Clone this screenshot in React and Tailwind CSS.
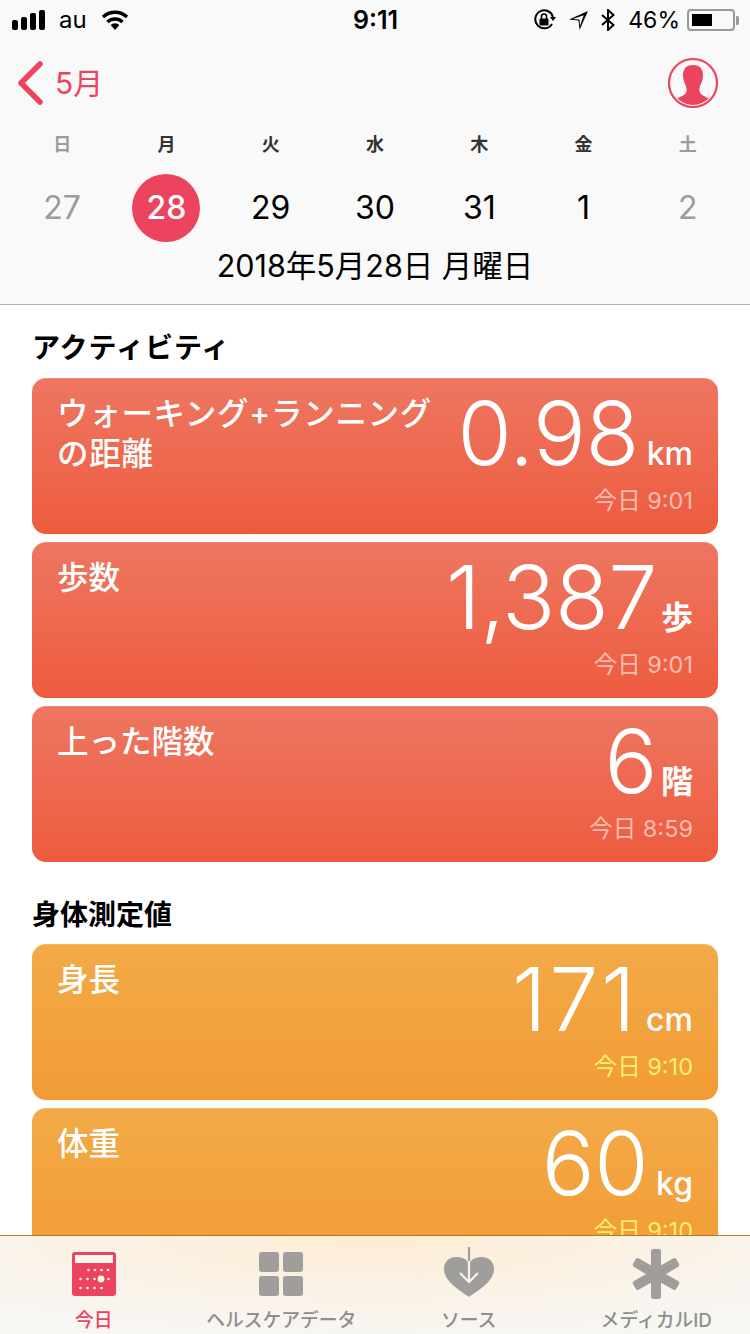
const sans = "font-['Inter','Noto_Sans_CJK_JP',sans-serif]";

const days = [
  { w: "日", d: "27", off: true },
  { w: "月", d: "28", today: true },
  { w: "火", d: "29" },
  { w: "水", d: "30" },
  { w: "木", d: "31" },
  { w: "金", d: "1" },
  { w: "土", d: "2", off: true },
];

function StatusBar() {
  return (
    <div className="h-10 flex items-center justify-between pl-3 pr-[11px] text-black">
      <div className="flex items-center w-[298px]">
        <div className="flex items-end gap-[3px] h-5">
          <div className="w-[6px] h-[10px] rounded-[2px] bg-black" />
          <div className="w-[6px] h-[13px] rounded-[2px] bg-black" />
          <div className="w-[6px] h-[17px] rounded-[2px] bg-black" />
          <div className="w-[6px] h-[20px] rounded-[2px] bg-black" />
        </div>
        <span className="ml-[14px] text-[24px] leading-none">au</span>
        <svg className="ml-[14px]" width="28" height="20" viewBox="0 0 28 20">
          <path d="M14 20 L9.6 15 A6.5 6.5 0 0 1 18.4 15 Z" fill="#000" />
          <path d="M6.5 12 A11 11 0 0 1 21.5 12" fill="none" stroke="#000" strokeWidth="3.4" />
          <path d="M2 7 A17.5 17.5 0 0 1 26 7" fill="none" stroke="#000" strokeWidth="3.4" />
        </svg>
      </div>
      <span className="text-[25px] font-semibold leading-none">9:11</span>
      <div className="flex items-center justify-end w-[298px]">
        <svg width="24" height="22" viewBox="0 0 24 22">
          <path d="M19 15 A9 9 0 1 1 20 8" fill="none" stroke="#000" strokeWidth="2" />
          <path d="M17 8 L23 8 L20 12 Z" fill="#000" />
          <rect x="6.5" y="9.5" width="9" height="7" rx="1" fill="#000" />
          <path d="M8.5 10 V7.5 A2.5 2.5 0 0 1 13.5 7.5 V10" fill="none" stroke="#000" strokeWidth="1.6" />
        </svg>
        <svg className="ml-[11px]" width="21" height="21" viewBox="0 0 20 20">
          <path d="M19 1 L1 9 L10 10 L11 19 Z M15 5 L4.5 8.6 L11 9 L11.4 15.2 Z" fill="#000" fillRule="evenodd" />
        </svg>
        <svg className="ml-[11px]" width="16" height="22" viewBox="0 0 15 22">
          <path d="M1.5 6 L13 16 L7.5 21 V1 L13 6 L1.5 16" fill="none" stroke="#000" strokeWidth="2" />
        </svg>
        <span className="ml-[12px] text-[23px] leading-none">46%</span>
        <div className="ml-[7px] w-[48px] h-[22px] rounded-[4px] border-2 border-[#9a9a9a] p-[3px]">
          <div className="w-[20px] h-full bg-black" />
        </div>
        <div className="w-[3px] h-[9px] rounded-r-[2px] bg-[#9a9a9a] ml-[1px]" />
      </div>
    </div>
  );
}

function DayCell({ day }) {
  return (
    <div className="flex flex-col items-center">
      <div className={`h-[24px] leading-[24px] text-[18px] font-semibold ${day.off ? "text-[#9b9b9b]" : "text-[#333]"}`}>
        {day.w}
      </div>
      <div
        className={`mt-[17px] w-[68px] h-[68px] rounded-full flex items-center justify-center text-[32px] ${
          day.today ? "bg-[#ec435f] text-white font-medium" : day.off ? "text-[#9b9b9b]" : "text-black"
        }`}
      >
        {day.d}
      </div>
    </div>
  );
}

function Header() {
  return (
    <div className="bg-[#f9f9f9] border-b border-[#b2b2b2] shrink-0">
      <StatusBar />
      <div className="h-[92px] flex items-center justify-between pl-[17px] pr-[31px] pb-[6px]">
        <div className="flex items-center">
          <svg width="26" height="44" viewBox="0 0 26 44">
            <path d="M23 3 L4 22 L23 41" fill="none" stroke="#ec435f" strokeWidth="5.5" strokeLinecap="round" strokeLinejoin="round" />
          </svg>
          <span className="ml-[12px] text-[30px] leading-none text-[#ec435f]">5月</span>
        </div>
        <svg width="52" height="52" viewBox="0 0 52 52">
          <defs>
            <clipPath id="avatar"><circle cx="26" cy="26" r="22" /></clipPath>
          </defs>
          <circle cx="26" cy="26" r="24" fill="none" stroke="#ec435f" strokeWidth="2.2" />
          <path
            clipPath="url(#avatar)"
            d="M26 8 C33 8 36 12 36 18 C36 24 33 28 32.5 31 C32 35 33 37 37 39 C41 41 44 42 45 46 L46 52 H6 L7 46 C8 42 11 41 15 39 C19 37 20 35 19.5 31 C19 28 16 24 16 18 C16 12 19 8 26 8 Z"
            fill="#ec435f"
          />
        </svg>
      </div>
      <div className="grid grid-cols-7 px-[10px] mt-[1px]">
        {days.map((day) => (
          <DayCell key={day.w} day={day} />
        ))}
      </div>
      <div className="text-center text-[30.5px] leading-[40px] text-black mt-[4px] pb-[18px]">2018年5月28日 月曜日</div>
    </div>
  );
}

function Card({ title, value, unit, time, tone, wide, kanji, valueClass = "tracking-[-0.5px]" }) {
  const bg =
    tone === "red"
      ? "bg-gradient-to-b from-[#ee7661] to-[#ed5b3e] border-[#f08a78]"
      : "bg-gradient-to-b from-[#f2aa47] to-[#f29b35] border-[#f4b565]";
  const timeColor = tone === "red" ? "text-[#f8bdaf]" : "text-[#fdf06a]";
  return (
    <div className={`${bg} h-[156px] rounded-[14px] border-t relative overflow-hidden flex justify-between pl-[25px] pr-[25px] text-white`}>
      <div className={`w-[380px] pt-[15px] text-[31.5px] leading-[40px] font-medium ${wide ? "tracking-[0.7px]" : ""}`}>{title}</div>
      <div className="flex flex-col items-end pt-[4px]">
        <div className="flex items-baseline h-[100px] leading-[100px]">
          <span className={`text-[88px] font-light ${valueClass}`}>{value}</span>
          <span className={`text-[32px] ${kanji ? "ml-[4px] font-semibold" : "ml-[8px] font-medium"}`}>{unit}</span>
        </div>
        <div className={`mt-[3px] text-[23.5px] leading-[30px] ${timeColor}`}>{time}</div>
      </div>
    </div>
  );
}

function SectionTitle({ children, wide }) {
  return (
    <div className={`h-[30px] mb-[15px] text-[28px] leading-[30px] font-semibold text-black ${wide ? "tracking-[1px]" : ""}`}>
      {children}
    </div>
  );
}

function Tab({ label, active, children }) {
  return (
    <div className="flex flex-col items-center">
      <div className="h-[68px] flex items-center justify-center">{children}</div>
      <div className={`mt-[1px] text-[18.8px] leading-[24px] font-medium whitespace-nowrap ${active ? "text-[#ec435f]" : "text-[#8e8e8e]"}`}>
        {label}
      </div>
    </div>
  );
}

function TabBar() {
  const dots = [
    [16, 18], [22.5, 18], [29, 18], [35.5, 18],
    [8, 27], [15, 27], [22, 27], [36, 27],
    [8, 36], [15, 36], [22, 36], [29, 36],
  ];
  return (
    <div className="h-[99px] shrink-0 border-t border-[#b4781e] bg-[radial-gradient(ellipse_70%_100%_at_50%_0%,#fdecd3,#f8f6f3)] grid grid-cols-4 pt-[4px]">
      <Tab label="今日" active>
        <svg width="44" height="44" viewBox="0 0 44 44">
          <rect width="44" height="44" rx="3" fill="#ec435f" />
          <rect x="3" y="3" width="38" height="8" fill="#fdf6ec" />
          {dots.map(([x, y]) => (
            <circle key={`${x}-${y}`} cx={x + 0.5} cy={y} r="1.3" fill="#fdf6ec" />
          ))}
          <circle cx="29" cy="27" r="3.4" fill="#fdf6ec" />
        </svg>
      </Tab>
      <Tab label="ヘルスケアデータ">
        <div className="grid grid-cols-2 gap-1 w-11">
          <div className="h-5 rounded-[3px] bg-[#a09e9c]" />
          <div className="h-5 rounded-[3px] bg-[#a09e9c]" />
          <div className="h-5 rounded-[3px] bg-[#a09e9c]" />
          <div className="h-5 rounded-[3px] bg-[#a09e9c]" />
        </div>
      </Tab>
      <Tab label="ソース">
        <svg width="50" height="54" viewBox="0 0 50 54">
          <path d="M25 50 C17 44 0 35 0 22 C0 14 6 10 12 10 C18 10 22 12 25 16 C28 12 32 10 38 10 C44 10 50 14 50 22 C50 35 33 44 25 50 Z" fill="#a09e9c" />
          <path d="M25 14 V35 M16 26 L25 35 L34 26" fill="none" stroke="#fbf3e8" strokeWidth="2.2" />
          <path d="M25 0 V14" fill="none" stroke="#a09e9c" strokeWidth="2.2" />
        </svg>
      </Tab>
      <Tab label="メディカルID">
        <svg width="50" height="50" viewBox="0 0 50 50">
          <g fill="#a09e9c">
            <rect x="20" y="0" width="10" height="50" rx="2.5" />
            <rect x="20" y="0" width="10" height="50" rx="2.5" transform="rotate(60 25 25)" />
            <rect x="20" y="0" width="10" height="50" rx="2.5" transform="rotate(120 25 25)" />
          </g>
        </svg>
      </Tab>
    </div>
  );
}

export default function App() {
  return (
    <div className={`w-[750px] h-[1334px] overflow-hidden flex flex-col bg-white ${sans}`}>
      <Header />
      <div className="flex-1 min-h-0 overflow-hidden px-[32px] pt-[28px]">
        <SectionTitle wide>アクティビティ</SectionTitle>
        <div className="flex flex-col gap-2">
          <Card tone="red" wide title="ウォーキング+ランニングの距離" value="0.98" unit="km" time="今日 9:01" />
          <Card tone="red" kanji title="歩数" value="1,387" unit="歩" time="今日 9:01" />
          <Card tone="red" kanji title="上った階数" value="6" unit="階" time="今日 8:59" />
        </div>
        <div className="mt-[38px] mb-[-1px]">
          <SectionTitle>身体測定値</SectionTitle>
        </div>
        <div className="flex flex-col gap-2">
          <Card tone="orange" title="身長" value="171" unit="cm" time="今日 9:10" valueClass="tracking-[2.5px]" />
          <Card tone="orange" title="体重" value="60" unit="kg" time="今日 9:10" />
        </div>
      </div>
      <TabBar />
    </div>
  );
}
